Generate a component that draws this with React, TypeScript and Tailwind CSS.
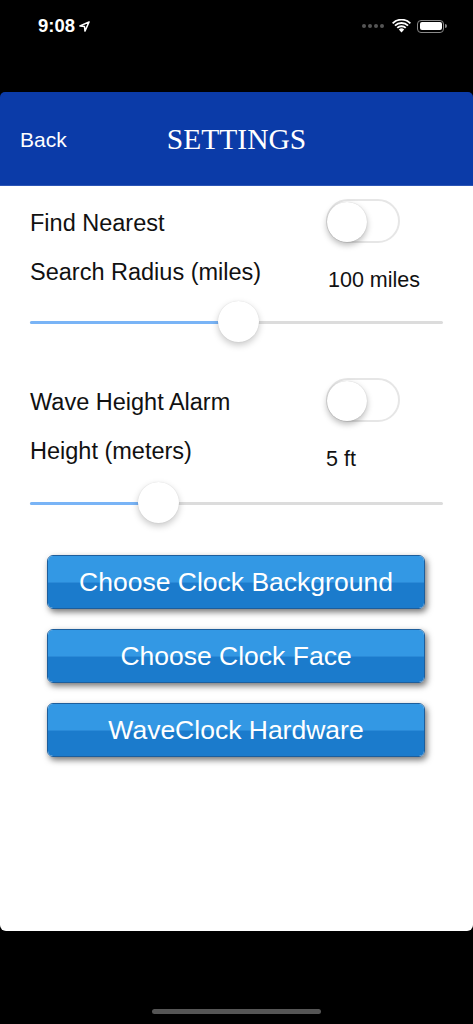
import React from "react";

const sans = { fontFamily: '"Liberation Sans", Arial, sans-serif' };

function Toggle() {
  return (
    <div className="relative w-[74px] h-[44px] rounded-full border-[2px] border-[#e6e6e6] bg-white">
      <div className="absolute left-[-1px] top-[1px] w-[40px] h-[40px] rounded-full bg-white shadow-[0_3px_6px_rgba(0,0,0,0.28),0_0_1px_rgba(0,0,0,0.2)]" />
    </div>
  );
}

function Slider({ pct }: { pct: number }) {
  return (
    <div className="relative h-[44px] flex items-center">
      <div className="w-full h-[3px] bg-[#dcdcdc] rounded-full">
        <div className="h-full bg-[#79b4f6] rounded-full" style={{ width: `${pct}%` }} />
      </div>
      <div
        className="absolute top-[1px] w-[41px] h-[41px] -ml-[20px] rounded-full bg-white shadow-[0_3px_7px_rgba(0,0,0,0.22),0_0_1px_rgba(0,0,0,0.15)]"
        style={{ left: `${pct}%` }}
      />
    </div>
  );
}

function BlueButton({ label }: { label: string }) {
  return (
    <div className="w-[378px] h-[54px] rounded-[6px] border border-[#1d5e9c] shadow-[2px_3px_6px_rgba(0,0,0,0.55)] overflow-hidden flex flex-col relative">
      <div className="h-1/2 bg-[#3398e4]" />
      <div className="h-1/2 bg-[#1b7bcc] border-t border-[#2a8ad8]" />
      <div className="absolute inset-0 flex items-center justify-center text-white text-[26.5px] pt-[2px]" style={sans}>
        {label}
      </div>
    </div>
  );
}

export default function App() {
  return (
    <div className="w-[473px] h-[1024px] bg-black flex flex-col" style={sans}>
      {/* status bar */}
      <div className="h-[50px] flex items-center justify-between pl-[38px] pr-[26px] pt-[2px]">
        <div className="flex items-center gap-[4px] text-white text-[18.5px] font-semibold">
          <span>9:08</span>
          <svg width="11" height="11" viewBox="0 0 12 12">
            <path d="M11 1 L1 5.5 L6 6 L6.5 11 Z" fill="none" stroke="white" strokeWidth="1.6" strokeLinejoin="round" />
          </svg>
        </div>
        <div className="flex items-center gap-[6px]">
          <div className="flex gap-[2px] mr-[2px]">
            <span className="w-[4px] h-[4px] rounded-full bg-[#555]" />
            <span className="w-[4px] h-[4px] rounded-full bg-[#555]" />
            <span className="w-[4px] h-[4px] rounded-full bg-[#555]" />
            <span className="w-[4px] h-[4px] rounded-full bg-[#555]" />
          </div>
          <svg width="19" height="14" viewBox="0 0 19 14">
            <path d="M9.5 13.5 L6.8 10.6 A3.9 3.9 0 0 1 12.2 10.6 Z" fill="white" />
            <path d="M4.6 8.3 A7 7 0 0 1 14.4 8.3 L13.1 9.6 A5.2 5.2 0 0 0 5.9 9.6 Z" fill="white" />
            <path d="M2.3 6 A10.2 10.2 0 0 1 16.7 6 L15.4 7.3 A8.4 8.4 0 0 0 3.6 7.3 Z" fill="white" />
            <path d="M0 3.7 A13.4 13.4 0 0 1 19 3.7 L17.7 5 A11.6 11.6 0 0 0 1.3 5 Z" fill="white" />
          </svg>
          <div className="flex items-center">
            <div className="w-[27px] h-[13px] rounded-[4px] border border-[#8a8a8a] p-[1.5px]">
              <div className="w-full h-full bg-white rounded-[2px]" />
            </div>
            <div className="w-[2px] h-[4px] bg-[#8a8a8a] rounded-r-sm ml-[1px]" />
          </div>
        </div>
      </div>
      <div className="h-[42px]" />
      {/* header */}
      <div className="h-[94px] bg-[#0b3ba8] rounded-t-[5px] flex items-center relative border-b border-[#2c55b6]">
        <span className="pl-[20px] text-white text-[21px] pt-[2px]">Back</span>
        <span
          className="absolute left-0 right-0 text-center text-white text-[29.5px] pointer-events-none pt-[1px]"
          style={{ fontFamily: '"Liberation Serif", "Times New Roman", serif' }}
        >
          SETTINGS
        </span>
      </div>
      {/* content panel */}
      <div className="h-[745px] bg-white rounded-b-[6px] flex flex-col px-[30px] text-[#111]">
        <div className="flex items-center justify-between pt-[13px] pr-[43px]">
          <span className="text-[23.5px] pt-[5px]">Find Nearest</span>
          <Toggle />
        </div>
        <div className="flex items-start justify-between mt-[12px] pr-[23px] h-[40px]">
          <span className="text-[23.5px] leading-[34px]">Search Radius (miles)</span>
          <span className="text-[21.5px] mt-[10px] leading-[30px]">100 miles</span>
        </div>
        <div className="mt-[5px]">
          <Slider pct={50.3} />
        </div>
        <div className="flex items-center justify-between mt-[34px] pr-[43px]">
          <span className="text-[23.5px] pt-[5px]">Wave Height Alarm</span>
          <Toggle />
        </div>
        <div className="flex items-start justify-between mt-[12px] pr-[87px] h-[40px]">
          <span className="text-[23.5px] leading-[34px]">Height (meters)</span>
          <span className="text-[21.5px] mt-[10px] leading-[30px]">5 ft</span>
        </div>
        <div className="mt-[7px]">
          <Slider pct={31.1} />
        </div>
        <div className="flex flex-col items-start gap-[20px] mt-[30px] pl-[17px]">
          <BlueButton label="Choose Clock Background" />
          <BlueButton label="Choose Clock Face" />
          <BlueButton label="WaveClock Hardware" />
        </div>
      </div>
      <div className="flex-1 flex items-end justify-center pb-[10px]">
        <div className="w-[169px] h-[5px] rounded-full bg-[#555]" />
      </div>
    </div>
  );
}
